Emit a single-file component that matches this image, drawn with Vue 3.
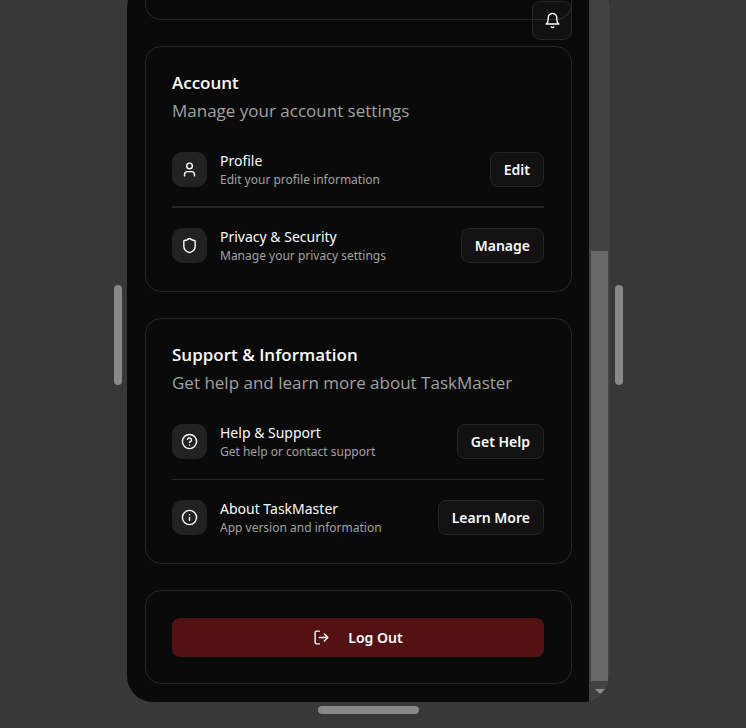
<script setup>
const sections = [
  {
    id: 'account',
    title: 'Account',
    text: 'Manage your account settings',
    strong: true,
    items: [
      { id: 'profile', icon: 'user', name: 'Profile', note: 'Edit your profile information', action: 'Edit' },
      { id: 'privacy', icon: 'shield', name: 'Privacy & Security', note: 'Manage your privacy settings', action: 'Manage' }
    ]
  },
  {
    id: 'support',
    title: 'Support & Information',
    text: 'Get help and learn more about TaskMaster',
    strong: false,
    items: [
      { id: 'help', icon: 'help', name: 'Help & Support', note: 'Get help or contact support', action: 'Get Help' },
      { id: 'about', icon: 'info', name: 'About TaskMaster', note: 'App version and information', action: 'Learn More' }
    ]
  }
]
</script>

<template>
  <div class="stage">
    <span class="handle side"></span>
    <div class="device">
      <main class="screen">
        <div class="card previous"></div>
        <button class="bell" type="button" aria-label="Notifications">
          <svg class="icon" viewBox="0 0 24 24"><path d="M10.3 21a1.94 1.94 0 0 0 3.4 0" /><path d="M6 8a6 6 0 0 1 12 0c0 7 3 9 3 9H3s3-2 3-9" /></svg>
        </button>

        <section v-for="section in sections" :key="section.id" class="card" :aria-labelledby="section.id">
          <header class="head">
            <h2 :id="section.id" class="title">{{ section.title }}</h2>
            <p class="text">{{ section.text }}</p>
          </header>
          <template v-for="(item, index) in section.items" :key="item.id">
            <hr v-if="index" class="line" :class="{ strong: section.strong }" />
            <div class="row">
              <span class="tile">
                <svg class="icon" viewBox="0 0 24 24">
                  <template v-if="item.icon === 'user'">
                    <circle cx="12" cy="7" r="4" />
                    <path d="M19 21v-2a4 4 0 0 0-4-4H9a4 4 0 0 0-4 4v2" />
                  </template>
                  <path v-else-if="item.icon === 'shield'" d="M20 13c0 5-3.5 7.5-7.66 8.95a1 1 0 0 1-.67-.01C7.5 20.5 4 18 4 13V6a1 1 0 0 1 1-1c2 0 4.5-1.2 6.24-2.72a1.17 1.17 0 0 1 1.52 0C14.51 3.81 17 5 19 5a1 1 0 0 1 1 1z" />
                  <template v-else-if="item.icon === 'help'">
                    <circle cx="12" cy="12" r="10" />
                    <path d="M9.09 9a3 3 0 0 1 5.83 1c0 2-3 3-3 3M12 17h.01" />
                  </template>
                  <template v-else>
                    <circle cx="12" cy="12" r="10" />
                    <path d="M12 16v-4M12 8h.01" />
                  </template>
                </svg>
              </span>
              <div class="label">
                <h3 class="name">{{ item.name }}</h3>
                <p class="note">{{ item.note }}</p>
              </div>
              <button class="action" type="button">{{ item.action }}</button>
            </div>
          </template>
        </section>

        <section class="card session">
          <button class="logout" type="button">
            <svg class="icon" viewBox="0 0 24 24"><path d="M9 21H5a2 2 0 0 1-2-2V5a2 2 0 0 1 2-2h4M16 17l5-5-5-5M21 12H9" /></svg>
            Log Out
          </button>
        </section>
      </main>
      <div class="scrollbar" aria-hidden="true">
        <span class="before"></span>
        <span class="thumb"></span>
        <span class="arrow"></span>
      </div>
    </div>
    <span class="handle side"></span>
    <span class="handle bottom"></span>
  </div>
</template>

<style>
body {
  margin: 0;
  background: #383838;
}
</style>

<style scoped>
.stage {
  box-sizing: border-box;
  min-height: 100vh;
  padding: 0 123px 0 114px;
  overflow: hidden;
  display: grid;
  grid-template-columns: 8px minmax(0, 1fr) 8px;
  grid-template-rows: auto 1fr;
  column-gap: 5px;
  row-gap: 4px;
  background: #383838;
  color: #fafafa;
  font-family: "Segoe UI", "Noto Sans", sans-serif;
}

.handle {
  border-radius: 4px;
  background: #888;
}

.side {
  align-self: center;
  height: 100px;
  margin-bottom: 32px;
}

.bottom {
  grid-column: 2;
  justify-self: center;
  width: 101px;
  height: 8px;
}

.device {
  display: flex;
  margin-top: -18px;
  border-radius: 26px;
  overflow: hidden;
  background: #0a0a0a;
}

.screen {
  position: relative;
  flex: 1;
  min-width: 0;
  display: flex;
  flex-direction: column;
  gap: 26px;
  padding: 0 17px 18px 18px;
}

.card {
  box-sizing: border-box;
  padding: 26px 27px 26px 26px;
  border: 1px solid #262626;
  border-radius: 16px;
}

.previous {
  height: 38px;
  padding: 0;
  border-top: 0;
  border-radius: 0 0 16px 16px;
}

.session {
  padding-top: 27px;
}

.icon {
  width: 17px;
  height: 17px;
  fill: none;
  stroke: currentColor;
  stroke-width: 2;
  stroke-linecap: round;
  stroke-linejoin: round;
}

.bell {
  position: absolute;
  top: 19px;
  right: 17px;
  width: 40px;
  height: 39px;
  display: grid;
  place-items: center;
  padding: 0;
  border: 1px solid #262626;
  border-radius: 8px;
  background: rgba(255, 255, 255, 0.03);
  color: #fafafa;
}

.head {
  margin-bottom: 25px;
  font-family: "Segoe UI", "Open Sans", sans-serif;
}

.title,
.text,
.name,
.note {
  margin: 0;
}

.title {
  font-size: 17px;
  font-weight: 600;
  line-height: 20px;
}

.text {
  margin-top: 4px;
  font-size: 17px;
  line-height: 28px;
  color: #a1a1a1;
}

.row {
  display: flex;
  align-items: center;
  gap: 13px;
}

.tile {
  width: 35px;
  height: 35px;
  display: grid;
  place-items: center;
  border-radius: 10px;
  background: #222;
}

.label {
  flex: 1;
  min-width: 0;
}

.name {
  font-size: 14px;
  font-weight: 400;
  line-height: 21px;
}

.note {
  font-size: 12px;
  line-height: 18px;
  color: #a1a1a1;
}

.line {
  height: 1px;
  margin: 18px 0;
  border: 0;
  background: #262626;
}

.strong {
  height: 2px;
  margin: 17px 0 18px;
}

.action,
.logout {
  font-family: inherit;
  font-size: 14px;
  font-weight: 600;
  color: #fafafa;
  border-radius: 8px;
}

.action {
  height: 35px;
  padding: 0 13px;
  border: 1px solid #262626;
  background: #121212;
}

.logout {
  width: 100%;
  height: 39px;
  display: flex;
  align-items: center;
  justify-content: center;
  gap: 18px;
  padding: 0;
  border: 0;
  background: #521214;
}

.scrollbar {
  width: 21px;
  display: flex;
  flex-direction: column;
  align-items: center;
  background: #424242;
}

.before {
  flex: 5;
}

.thumb {
  flex: 8;
  width: 17px;
  background: #686868;
}

.arrow {
  height: 21px;
  display: grid;
  place-items: center;
}

.arrow::after {
  content: "";
  border: 5px solid transparent;
  border-top-color: #8c8c8c;
  border-bottom: 0;
}
</style>
